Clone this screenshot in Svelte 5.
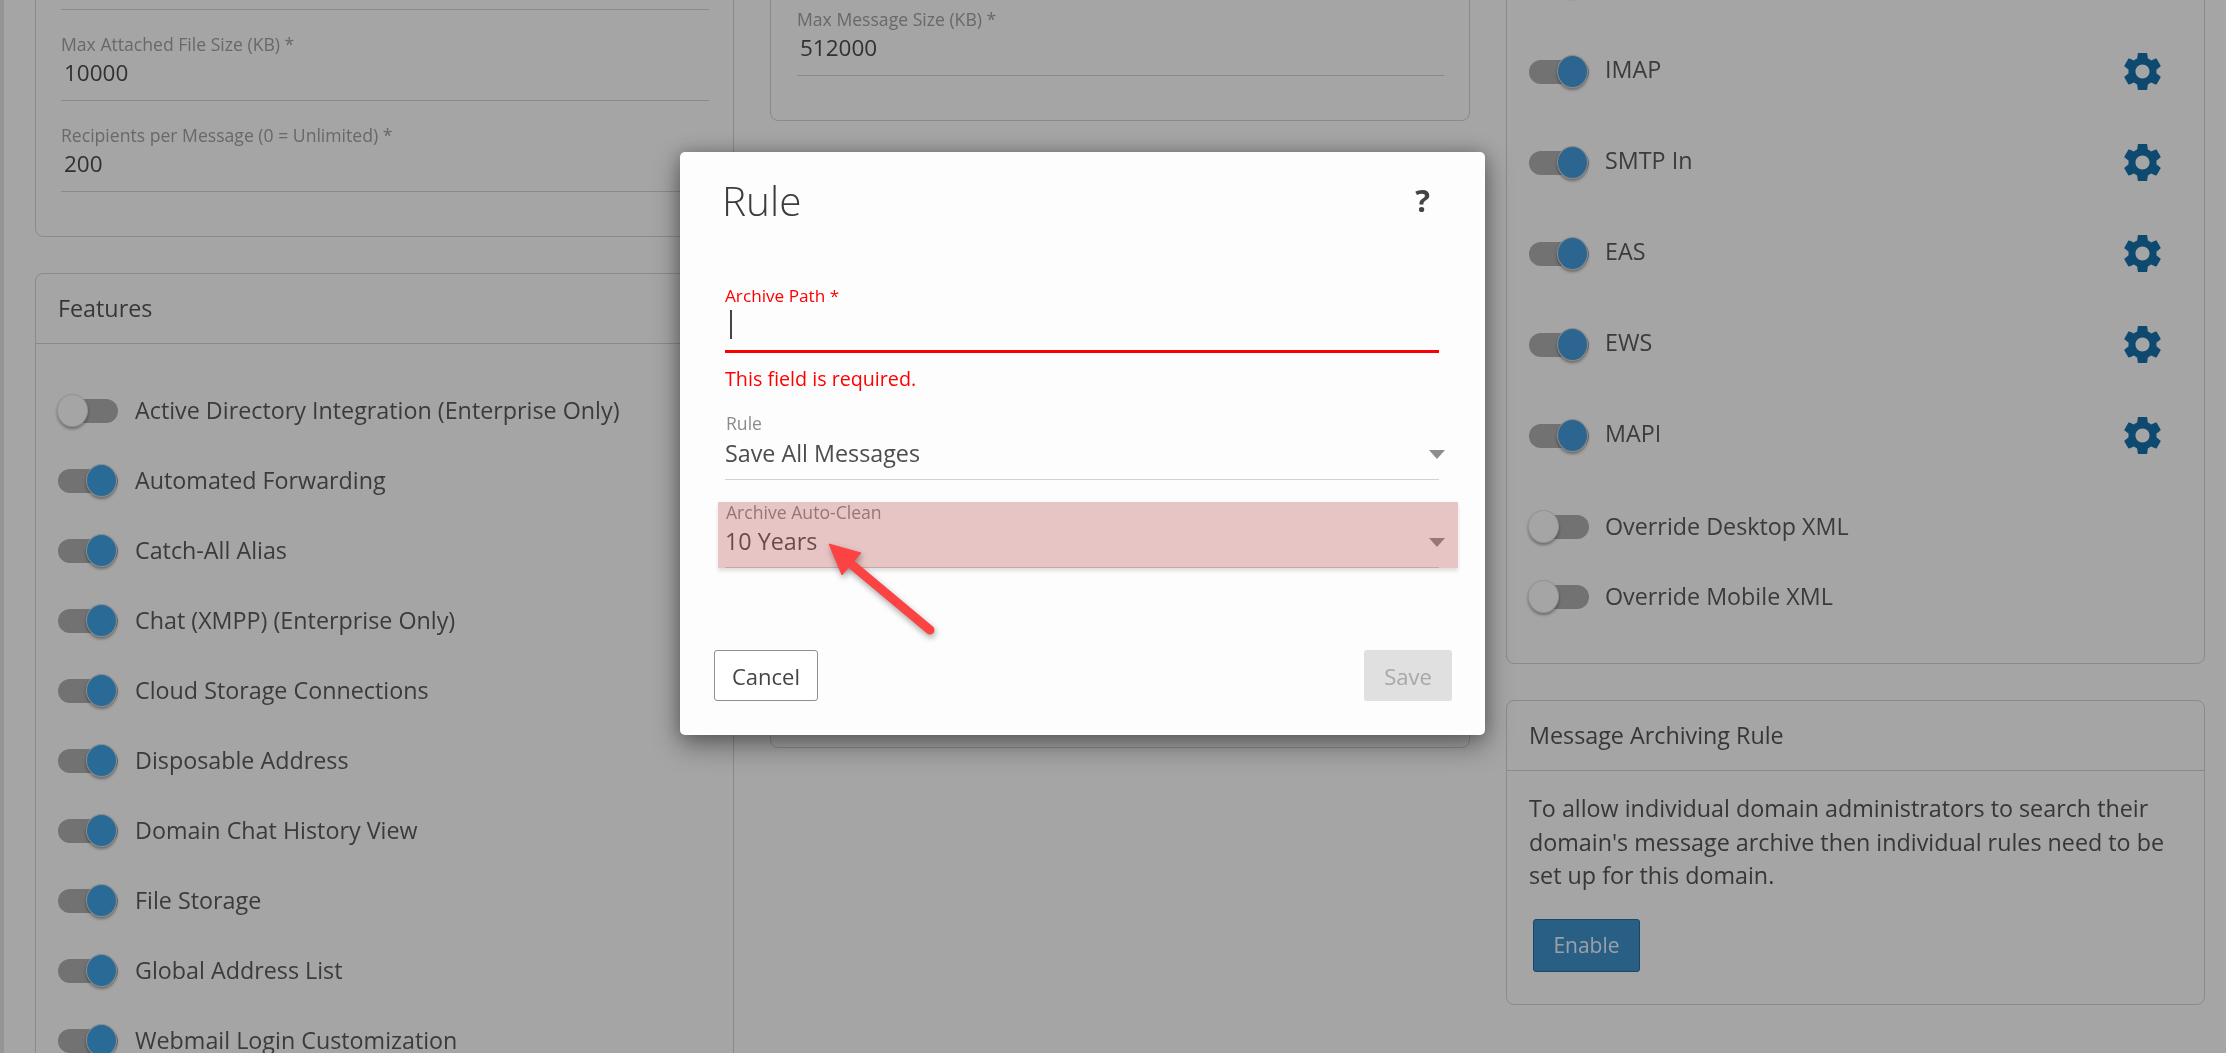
<script>
  const features = [
    ['Active Directory Integration (Enterprise Only)', false],
    ['Automated Forwarding', true],
    ['Catch-All Alias', true],
    ['Chat (XMPP) (Enterprise Only)', true],
    ['Cloud Storage Connections', true],
    ['Disposable Address', true],
    ['Domain Chat History View', true],
    ['File Storage', true],
    ['Global Address List', true],
    ['Webmail Login Customization', true]
  ];
  const protocols = ['', 'IMAP', 'SMTP In', 'EAS', 'EWS', 'MAPI'];
  const overrides = ['Override Desktop XML', 'Override Mobile XML'];
  const gear = 'M19.14 12.94c.04-.3.06-.61.06-.94 0-.32-.02-.64-.07-.94l2.03-1.58c.18-.14.23-.41.12-.61l-1.92-3.32c-.12-.22-.37-.29-.59-.22l-2.39.96c-.5-.38-1.03-.7-1.62-.94l-.36-2.54c-.04-.24-.24-.41-.48-.41h-3.84c-.24 0-.43.17-.47.41l-.36 2.54c-.59.24-1.13.57-1.62.94l-2.39-.96c-.22-.08-.47 0-.59.22L2.74 8.87c-.12.21-.08.47.12.61l2.03 1.58c-.05.3-.09.63-.09.94s.02.64.07.94l-2.03 1.58c-.18.14-.23.41-.12.61l1.92 3.32c.12.22.37.29.59.22l2.39-.96c.5.38 1.03.7 1.62.94l.36 2.54c.05.24.24.41.48.41h3.84c.24 0 .44-.17.47-.41l.36-2.54c.59-.24 1.13-.56 1.62-.94l2.39.96c.22.08.47 0 .59-.22l1.92-3.32c.12-.22.07-.47-.12-.61l-2.01-1.58zM12 15.6c-1.98 0-3.6-1.62-3.6-3.6s1.62-3.6 3.6-3.6 3.6 1.62 3.6 3.6-1.62 3.6-3.6 3.6z';
</script>

{#snippet toggle(on)}
  <span class="toggle" class:on><span class="knob"></span></span>
{/snippet}

<div class="root">
  <div class="page">
    <div class="columns">
      <div class="col">
        <section class="card top-left">
          <div class="field blank"></div>
          <div class="field">
            <div class="flabel">Max Attached File Size (KB) *</div>
            <div class="fvalue">10000</div>
          </div>
          <div class="field">
            <div class="flabel">Recipients per Message (0 = Unlimited) *</div>
            <div class="fvalue">200</div>
          </div>
        </section>
        <section class="card">
          <header class="chead">Features</header>
          <div class="feature-list">
            {#each features as [name, on]}
              <div class="row feature">
                {@render toggle(on)}
                <span class="rtext">{name}</span>
              </div>
            {/each}
          </div>
        </section>
      </div>

      <div class="col">
        <section class="card top-mid">
          <div class="field">
            <div class="flabel">Max Message Size (KB) *</div>
            <div class="fvalue">512000</div>
          </div>
        </section>
        <section class="card mid-lower"></section>
      </div>

      <div class="col">
        <section class="card top-right">
          {#each protocols as name}
            <div class="row proto">
              {@render toggle(true)}
              <span class="rtext">{name}</span>
              <svg class="gear" viewBox="2.5 2.5 19 19" aria-hidden="true"><path d={gear} /></svg>
            </div>
          {/each}
          <div class="overrides">
            {#each overrides as name}
              <div class="row feature">
                {@render toggle(false)}
                <span class="rtext">{name}</span>
              </div>
            {/each}
          </div>
        </section>
        <section class="card">
          <header class="chead">Message Archiving Rule</header>
          <div class="archbody">
            <p>To allow individual domain administrators to search their domain's message archive then individual rules need to be set up for this domain.</p>
            <button class="enable">Enable</button>
          </div>
        </section>
      </div>
    </div>
  </div>

  <div class="backdrop"></div>

  <div class="modal">
    <div class="mhead">
      <h2>Rule</h2>
      <span class="help">?</span>
    </div>
    <div class="mfield error">
      <div class="mlabel">Archive Path *</div>
      <div class="minput"><span class="caret"></span></div>
      <div class="merror">This field is required.</div>
    </div>
    <div class="mfield select">
      <div class="mlabel">Rule</div>
      <div class="mvalue">Save All Messages<span class="tri"></span></div>
    </div>
    <div class="mfield select clean">
      <div class="mlabel">Archive Auto-Clean</div>
      <div class="mvalue">10 Years<span class="tri"></span></div>
      <div class="hl"></div>
    </div>
    <div class="mfoot">
      <button class="cancel">Cancel</button>
      <button class="save">Save</button>
    </div>
  </div>

  <svg class="arrow" viewBox="0 0 125 110" aria-hidden="true">
    <path d="M31 29 L110 95" fill="none" stroke="#fb4343" stroke-width="9" stroke-linecap="round" />
    <path d="M9 9 L41 18 L22 40 Z" fill="#fb4343" stroke="#fb4343" stroke-width="1" stroke-linejoin="round" />
  </svg>
</div>

<style>
  :global(body) {
    margin: 0;
    background: #fff;
  }
  .root {
    position: relative;
    width: 2226px;
    height: 1053px;
    overflow: hidden;
    font-family: "Open Sans", "Liberation Sans", sans-serif;
    font-size: 23.3px;
    color: #5c5c5c;
    filter: blur(0.7px);
  }
  .page {
    height: 1053px;
    overflow: hidden;
    background: #ffffff;
    border-left: 4px solid #e6e6e6;
    box-sizing: border-box;
  }
  .columns {
    display: grid;
    grid-template-columns: 699px 700px 699px;
    column-gap: 36px;
    padding-left: 31px;
    margin-top: -83px;
  }
  .col {
    display: flex;
    flex-direction: column;
    gap: 36px;
    min-width: 0;
  }
  .card {
    border: 1.5px solid #d6d6d6;
    border-radius: 8px;
    box-sizing: border-box;
  }
  .top-left {
    height: 320px;
    padding: 0 24px 0 25px;
  }
  .top-mid {
    height: 204px;
    padding: 67px 25px 0 26px;
  }
  .mid-lower {
    height: 591px;
  }
  .top-right {
    height: 747px;
    padding: 17px 43px 0 22px;
  }
  .field {
    height: 91px;
    box-sizing: border-box;
    border-bottom: 1.5px solid #d6d6d6;
    padding-top: 24px;
  }
  .field.blank {
    height: 92px;
    padding: 0;
  }
  .flabel {
    font-size: 17.6px;
    line-height: 20px;
    color: #a2a2a2;
  }
  .fvalue {
    font-size: 22.5px;
    line-height: 30px;
    margin-top: 4px;
    padding-left: 3px;
    color: #4c4c4c;
  }
  .chead {
    height: 70px;
    line-height: 68px;
    padding-left: 22px;
    box-sizing: border-box;
    border-bottom: 1.5px solid #d6d6d6;
    color: #555;
  }
  .feature-list {
    padding: 32px 0 0 22px;
  }
  .row {
    display: flex;
    align-items: center;
  }
  .rtext {
    position: relative;
    top: -1px;
  }
  .proto .rtext {
    top: -2.5px;
  }
  .feature {
    height: 70px;
    gap: 17px;
  }
  .proto {
    height: 91px;
    gap: 16px;
  }
  .overrides {
    margin-top: 11px;
  }
  .overrides .feature {
    gap: 16px;
  }
  .gear {
    width: 37px;
    height: 37px;
    margin-left: auto;
    fill: #1773ad;
  }
  .toggle {
    position: relative;
    display: block;
    flex: none;
    width: 60px;
    height: 24px;
    margin: 0;
    border-radius: 12px;
    background: #b0b0b0;
  }
  .knob {
    position: absolute;
    top: -5px;
    left: -1px;
    width: 31px;
    height: 33px;
    box-sizing: border-box;
    border-radius: 50%;
    background: #fff;
    border: 1px solid #e4e4e4;
    box-shadow: 0 2px 3px rgba(0, 0, 0, 0.35);
  }
  .toggle.on .knob {
    left: 28px;
    background: #40a5ea;
    border-color: #d8d8d8;
  }
  .proto .toggle.on .knob {
    background: #449cde;
  }
  .archbody {
    padding: 21px 22px 32px;
  }
  .archbody p {
    margin: 0;
    line-height: 33.5px;
    color: #555;
  }
  .enable {
    display: block;
    margin: 26px 0 0 4px;
    width: 107px;
    height: 53px;
    padding: 0;
    font: inherit;
    font-size: 21px;
    color: #f0f8ff;
    background: #4193ce;
    border: 1.5px solid #2a6d9e;
    border-radius: 3px;
  }
  .backdrop {
    position: absolute;
    inset: 0;
    background: rgba(0, 0, 0, 0.352);
  }
  .modal {
    position: absolute;
    left: 680px;
    top: 152px;
    width: 805px;
    height: 583px;
    display: flex;
    flex-direction: column;
    background: #fdfdfd;
    border-radius: 5px;
    box-shadow: 0 10px 28px rgba(0, 0, 0, 0.4), 0 0 16px rgba(0, 0, 0, 0.22);
    color: #4b4b4b;
  }
  .mhead {
    display: flex;
    align-items: center;
    justify-content: space-between;
    box-sizing: border-box;
    height: 98px;
    padding: 0 55px 2px 42px;
  }
  .mhead h2 {
    margin: 0;
    font-size: 40.5px;
    font-weight: 350;
    color: #3c3c3c;
  }
  .help {
    font-size: 31px;
    font-weight: 700;
    color: #444;
  }
  .mfield {
    position: relative;
    margin: 0 46px 0 45px;
  }
  .mlabel {
    font-size: 17.6px;
    line-height: 20px;
    color: #8b8b8b;
    padding-left: 1px;
  }
  .error {
    margin-top: 36px;
    height: 127px;
  }
  .error .mlabel {
    color: #f00;
    padding-left: 0;
    font-size: 17.2px;
  }
  .minput {
    height: 47px;
    box-sizing: border-box;
    border-bottom: 3px solid #f00;
    padding: 4px 0 0 5px;
  }
  .caret {
    display: block;
    width: 2px;
    height: 29px;
    background: #444;
  }
  .merror {
    margin-top: 14px;
    font-size: 19.7px;
    line-height: 24px;
    color: #f00;
  }
  .select {
    height: 66px;
    border-bottom: 1.5px solid #d2d2d2;
  }
  .mvalue {
    position: relative;
    margin-top: 5px;
    font-size: 23.3px;
    line-height: 30px;
    color: #4d4d4d;
  }
  .clean {
    margin-top: 22px;
    height: 65px;
  }
  .clean .mvalue {
    margin-top: 4px;
  }
  .tri {
    position: absolute;
    right: -6px;
    top: 12px;
    border-left: 8.5px solid transparent;
    border-right: 8.5px solid transparent;
    border-top: 9px solid #8d8d8d;
  }
  .hl {
    position: absolute;
    left: -7px;
    right: -19px;
    top: 0;
    bottom: -1px;
    background: rgba(183, 70, 70, 0.3);
    box-shadow: 0 3px 4px rgba(0, 0, 0, 0.12);
  }
  .mfoot {
    display: flex;
    justify-content: space-between;
    margin-top: auto;
    padding: 0 33px 34px 34px;
  }
  .mfoot button {
    height: 51px;
    padding: 0;
    font: inherit;
    font-size: 22px;
    border-radius: 3px;
  }
  .cancel {
    width: 104px;
    background: #fff;
    border: 1.5px solid #8f8f8f;
    color: #444;
  }
  .save {
    width: 88px;
    background: #e0e0e0;
    border: none;
    color: #a8a8a8;
  }
  .arrow {
    position: absolute;
    left: 820px;
    top: 535px;
    width: 125px;
    height: 110px;
    overflow: visible;
    filter: drop-shadow(1px 3px 3px rgba(0, 0, 0, 0.35));
  }
</style>
